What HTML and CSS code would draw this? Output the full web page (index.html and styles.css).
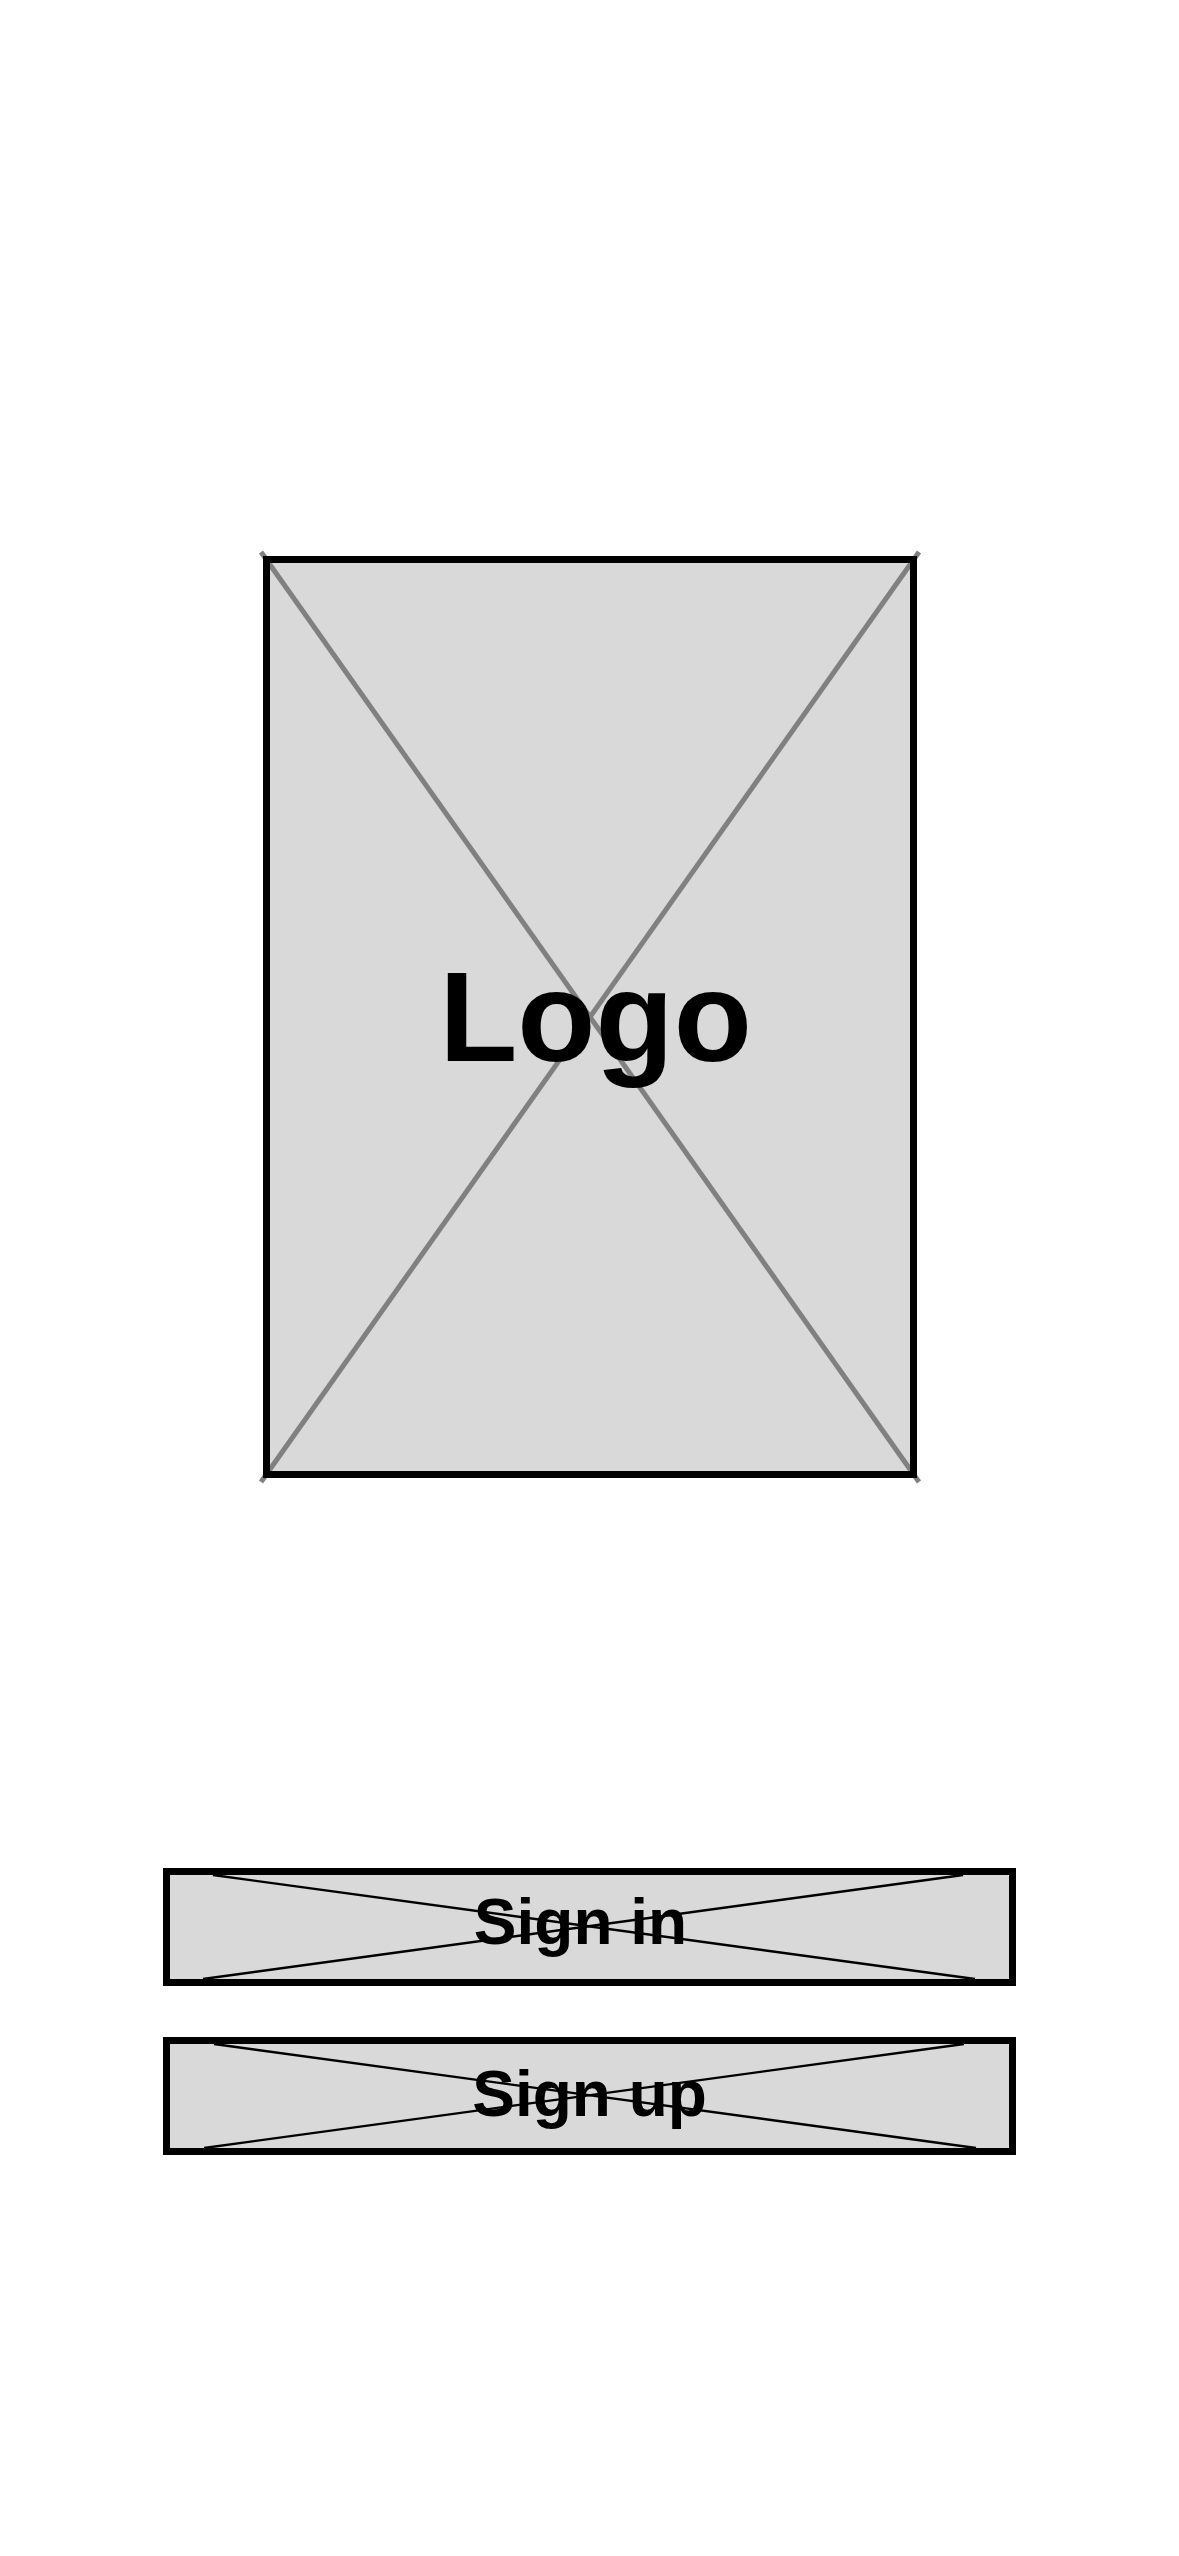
FILE: index.html
```html
<!DOCTYPE html>
<html lang="en">
<head>
<meta charset="utf-8">
<title>Welcome</title>
<link rel="stylesheet" href="styles.css">
</head>
<body>
<main class="screen">
  <div class="logo-box">
    <svg class="placeholder" viewBox="0 0 654 922" preserveAspectRatio="none" aria-hidden="true">
      <rect x="0" y="0" width="654" height="922" fill="#d9d9d9"/>
      <line x1="-2" y1="-4" x2="656" y2="926" stroke="#808080" stroke-width="5"/>
      <line x1="656" y1="-4" x2="-2" y2="926" stroke="#808080" stroke-width="5"/>
      <rect x="3.5" y="3.5" width="647" height="915" fill="none" stroke="#000" stroke-width="7"/>
    </svg>
    <span class="logo-label">Logo</span>
  </div>
  <div class="actions">
    <button class="btn" type="button">
      <svg class="placeholder" viewBox="0 0 853 118" preserveAspectRatio="none" aria-hidden="true">
        <rect x="0" y="0" width="853" height="118" fill="#d9d9d9"/>
        <line x1="50" y1="7" x2="812" y2="111" stroke="#000" stroke-width="2.4"/>
        <line x1="40" y1="111" x2="800" y2="7" stroke="#000" stroke-width="2.4"/>
        <rect x="3.5" y="3.5" width="846" height="111" fill="none" stroke="#000" stroke-width="7"/>
      </svg>
      <span class="btn-label btn-label--signin">Sign in</span>
    </button>
    <button class="btn" type="button">
      <svg class="placeholder" viewBox="0 0 853 118" preserveAspectRatio="none" aria-hidden="true">
        <rect x="0" y="0" width="853" height="118" fill="#d9d9d9"/>
        <line x1="51" y1="7" x2="813" y2="111" stroke="#000" stroke-width="2.4"/>
        <line x1="41" y1="111" x2="801" y2="7" stroke="#000" stroke-width="2.4"/>
        <rect x="3.5" y="3.5" width="846" height="111" fill="none" stroke="#000" stroke-width="7"/>
      </svg>
      <span class="btn-label btn-label--signup">Sign up</span>
    </button>
  </div>
</main>
</body>
</html>
```
FILE: styles.css
```css
* {
  box-sizing: border-box;
}

html, body {
  margin: 0;
  padding: 0;
  background: #ffffff;
}

body {
  width: 1179px;
  min-height: 2556px;
  font-family: "Liberation Sans", Arial, sans-serif;
  color: #000;
}

.screen {
  display: flex;
  flex-direction: column;
  align-items: center;
  padding-top: 556px;
}

.logo-box {
  position: relative;
  width: 654px;
  height: 922px;
  display: flex;
  align-items: center;
  justify-content: center;
}

.placeholder {
  position: absolute;
  left: 0;
  top: 0;
  width: 100%;
  height: 100%;
  overflow: visible;
}

.logo-label {
  position: relative;
  font-weight: 700;
  font-size: 128px;
  line-height: 1;
  padding-left: 12px;
}

.actions {
  margin-top: 390px;
  display: flex;
  flex-direction: column;
  align-items: center;
  gap: 51px;
}

.btn {
  position: relative;
  width: 853px;
  height: 118px;
  margin: 0;
  padding: 0;
  border: none;
  background: none;
  display: flex;
  align-items: center;
  justify-content: center;
  font-family: "Liberation Sans", Arial, sans-serif;
  cursor: pointer;
}

.btn-label {
  position: relative;
  font-weight: 700;
  font-size: 64px;
  line-height: 1;
  color: #000;
}

.btn-label--signin {
  padding-right: 18px;
  padding-bottom: 10px;
}

.btn-label--signup {
  padding-bottom: 4px;
}
```
